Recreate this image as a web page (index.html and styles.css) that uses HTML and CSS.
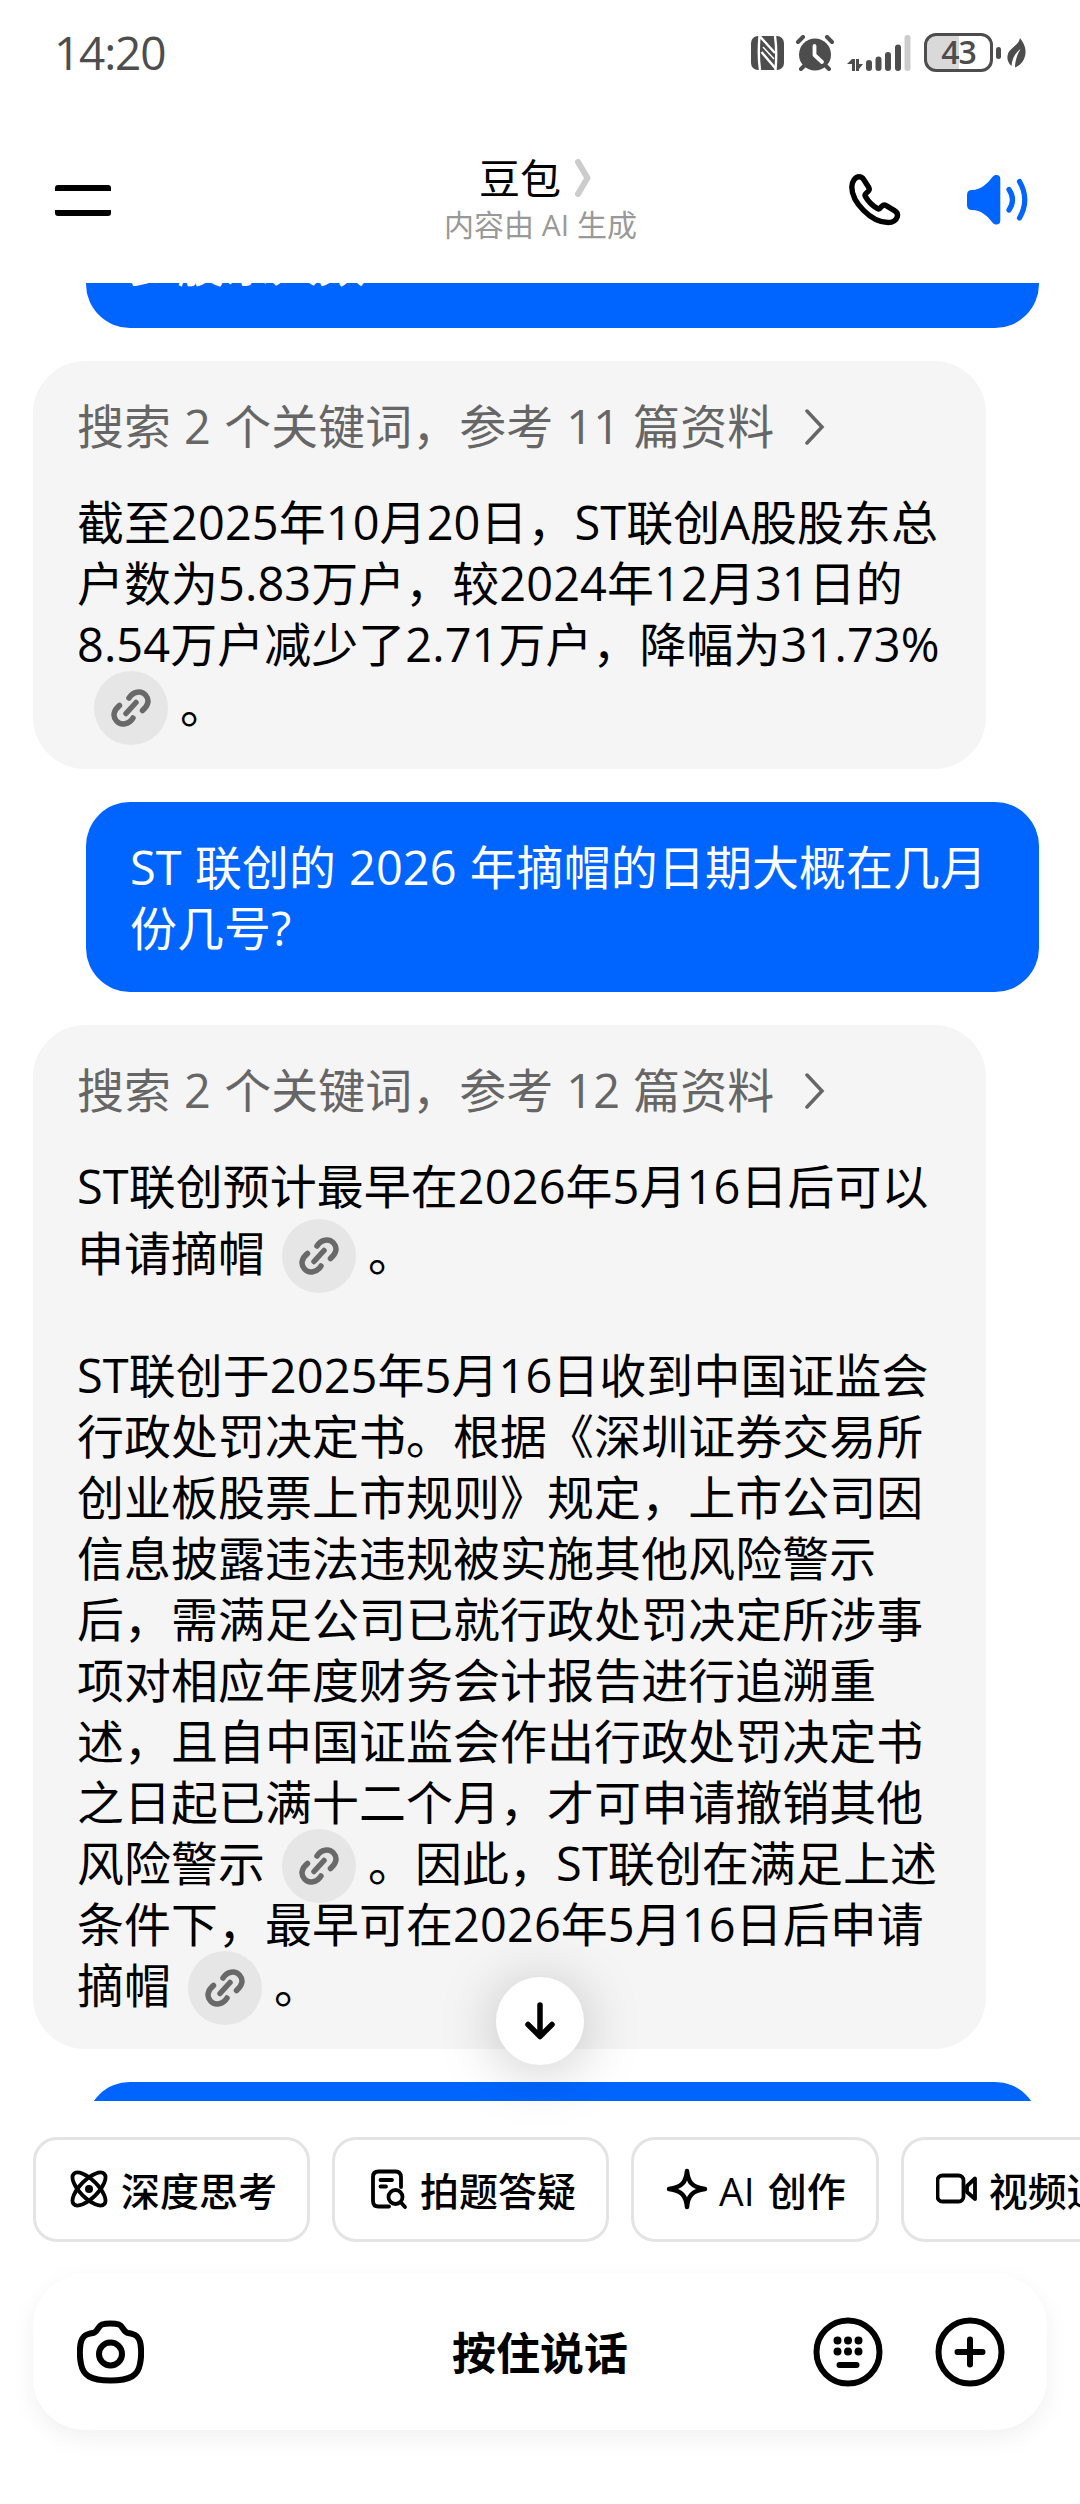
FILE: index.html
```html
<!DOCTYPE html>
<html lang="zh-CN">
<head>
<meta charset="utf-8">
<meta name="viewport" content="width=device-width">
<title>豆包</title>
<link rel="stylesheet" href="styles.css">
</head>

<body>

<!-- shared icons -->
<svg class="defs">
  <symbol id="link" viewBox="0 0 40 40">
    <path d="M18 10C22 3.500 30 2 34.500 7C39 12 37 18 31.500 22.500M22 30C18 36.500 10 38 5.500 33C1 28 3 22 8.500 17.500M15 25.500L25 14.500"/>
  </symbol>
  <symbol id="more" viewBox="0 0 20 36">
    <path d="M2 2L17 18L2 34"/>
  </symbol>
</svg>

<div class="status">
  <span class="time">14:20</span>
  <svg class="nfc" width="33" height="34" viewBox="0 0 33 34">
    <rect width="33" height="34" rx="7" fill="#4d4d4d"/>
    <path d="M8.500 0C7.500 12 7.500 24 9 34M24 0C25.500 10 25.500 22 24.500 34M8.500 0L24 17M10.500 16L25 33" fill="none" stroke="#fff" stroke-width="2.400"/>
    <path d="M12 11L23 23" fill="none" stroke="#fff" stroke-width="1.500"/>
  </svg>
  <svg class="alarm" width="38" height="36" viewBox="0 0 38 36">
    <circle cx="19" cy="19.500" r="16" fill="#4d4d4d"/>
    <path d="M2 7L7 2M36 7L31 2M5 34L9 30M33 34L29 30" stroke="#4d4d4d" stroke-width="4" stroke-linecap="round"/>
    <path d="M18.500 11V20L26 27" fill="none" stroke="#fff" stroke-width="3.800" stroke-linecap="round" stroke-linejoin="round"/>
  </svg>
  <svg class="signal" width="66" height="36" viewBox="0 0 66 36">
    <path d="M0 29L5 24H8V36H5V29ZM9 24H12V29H16L12 34V36H9Z" fill="#4d4d4d"/>
    <path d="M22 28V33M31.500 24.500V33M41 20V33M51 12.500V33" stroke="#4d4d4d" stroke-width="6" stroke-linecap="round"/>
    <path d="M60.500 3V33" stroke="#ccc" stroke-width="6" stroke-linecap="round"/>
  </svg>
  <span class="battery">43</span>
  <i class="nub"></i>
  <svg class="leaf" width="19" height="30" viewBox="0 0 19 30">
    <path d="M13 0C16 4 19 9 18.500 15C18 22 14 27 8 29.500C8 23 10 17 13.500 11C8 15 5 21 4.500 28C1 25 0 21 .5 18C1.500 10 11 9 13 0Z" fill="#4d4d4d"/>
  </svg>
</div>

<header class="header">
  <div class="side">
    <i class="menu"></i>
  </div>
  <div class="title">
    <h1>豆包
      <svg width="16" height="38" viewBox="0 0 16 38"><path d="M3 3L12.500 19L3 35"/></svg>
    </h1>
    <p>内容由 AI 生成</p>
  </div>
  <div class="side right">
    <svg width="52" height="52" viewBox="0 0 52 52">
      <path d="M2.800 13C3 7 6.500 2.800 10 2.800C12 2.800 13.500 3.800 14.500 5.300L19.500 13C20.600 14.800 20.600 16 19.200 17.400L16.800 19.600C15.800 20.600 15.800 21.500 16.500 22.600C19 27 24 32 28.500 34.600C29.700 35.200 30.300 35 31 34.200L33 32.200C34.200 30.900 35.600 30.700 37.200 31.600L45.500 36.600C48.300 38.300 49 40.500 48.200 43C47 46.500 43.500 48.500 39 48.500C22 48.500 2.800 28 2.800 13Z" fill="none" stroke="#000" stroke-width="5.400"/>
    </svg>
    <svg width="62" height="52" viewBox="0 0 62 52">
      <path d="M0 21Q0 16 5 16C14 16 21 9 25 3.500C26.500 1.500 28 1 29.500 1Q33.300 1 33.300 5V46.500Q33.300 50.500 29.500 50.500C28 50.500 26.500 50 25 48C21 42.500 14 36 5 36Q0 36 0 31Z" fill="#0065ff"/>
      <path d="M42 15.500Q49 25.700 42 36M52.500 7.500Q63 25.700 52.500 44" fill="none" stroke="#0065ff" stroke-width="5.200" stroke-linecap="round"/>
    </svg>
  </div>
</header>

<main class="chat">
  <div class="bubble user first">少股东人数</div>

  <div class="bubble bot">
    <div class="source">搜索 2 个关键词，参考 11 篇资料 <svg><use href="#more"/></svg></div>
    <p>
      截至2025年10月20日，ST联创A股股东总<br>
      户数为5.83万户，较2024年12月31日的<br>
      8.54万户减少了2.71万户，降幅为31.73%<br>
      <span class="cite"><svg><use href="#link"/></svg></span>。
    </p>
  </div>

  <div class="bubble user">
    ST 联创的 2026 年摘帽的日期大概在几月<br>
    份几号?
  </div>

  <div class="bubble bot">
    <div class="source">搜索 2 个关键词，参考 12 篇资料 <svg><use href="#more"/></svg></div>
    <p>ST联创预计最早在2026年5月16日后可以</p>
    <p class="tail">申请摘帽<span class="cite"><svg><use href="#link"/></svg></span>。</p>
    <p class="para">
      ST联创于2025年5月16日收到中国证监会<br>
      行政处罚决定书。根据《深圳证券交易所<br>
      创业板股票上市规则》规定，上市公司因<br>
      信息披露违法违规被实施其他风险警示<br>
      后，需满足公司已就行政处罚决定所涉事<br>
      项对相应年度财务会计报告进行追溯重<br>
      述，且自中国证监会作出行政处罚决定书<br>
      之日起已满十二个月，才可申请撤销其他<br>
      风险警示<span class="cite"><svg><use href="#link"/></svg></span>。因此，ST联创在满足上述<br>
      条件下，最早可在2026年5月16日后申请<br>
      摘帽<span class="cite"><svg><use href="#link"/></svg></span>。
    </p>
  </div>

  <div class="bubble user"></div>
</main>

<footer class="footer">
  <div class="scroll-down">
    <svg width="34" height="40" viewBox="0 0 34 40"><path d="M17 4V35M5 23.500L17 35.500L29 23.500"/></svg>
  </div>

  <div class="tools">
    <div class="tool">
      <svg viewBox="0 0 42 42">
        <ellipse cx="21" cy="21" rx="21.500" ry="9" transform="rotate(45 21 21)"/>
        <ellipse cx="21" cy="21" rx="21.500" ry="9" transform="rotate(-45 21 21)"/>
        <circle cx="21" cy="21" r="4" class="solid"/>
      </svg>
      深度思考
    </div>
    <div class="tool">
      <svg viewBox="0 0 42 42">
        <path d="M34 19V9Q34 3.500 28.500 3.500H11.500Q6 3.500 6 9V33Q6 38.500 11.500 38.500H22M13.500 12H25M13.500 18.500H19M34 34.500L38 39"/>
        <circle cx="28.500" cy="29" r="7"/>
      </svg>
      拍题答疑
    </div>
    <div class="tool">
      <svg viewBox="0 0 42 42">
        <path d="M21 3C22 14 26 19.500 39 21C26 22.500 22 28 21 39C20 28 16 22.500 3 21C16 19.500 20 14 21 3Z" stroke-width="4.500"/>
      </svg>
      AI 创作
    </div>
    <div class="tool">
      <svg viewBox="0 0 42 42">
        <rect x="1.500" y="7.500" width="26" height="26" rx="5"/>
        <path d="M31 18L39 10.500V31L31 24Z"/>
      </svg>
      视频通话
    </div>
  </div>

  <div class="input">
    <svg width="67" height="64" viewBox="0 0 67 64">
      <path d="M25 4.500C29 3 38 3 42 4.500C46 6 46.500 12.500 51 13C60 14 62.500 18 63.500 24C64.500 31 64.500 37 63 44C61 55 54 60.500 33.500 60.500C13 60.500 6 55 4 44C2.500 37 2.500 31 3.500 24C4.500 18 7 14 16 13C20.500 12.500 21 6 25 4.500Z"/>
      <circle cx="33.500" cy="34" r="11.500"/>
    </svg>
    <span class="hold">按住说话</span>
    <div class="actions">
      <svg width="70" height="70" viewBox="0 0 70 70">
        <circle cx="35" cy="35" r="31.500"/>
        <path d="M24.500 23.500h.01M35 23.500h.01M45.500 23.500h.01M24.500 34.500h.01M35 34.500h.01M45.500 34.500h.01" stroke-width="8"/>
        <path d="M26.500 48H43.500"/>
      </svg>
      <svg width="70" height="70" viewBox="0 0 70 70">
        <circle cx="35" cy="35" r="31.500"/>
        <path d="M35 22.500V47.500M22.500 35H47.500"/>
      </svg>
    </div>
  </div>
</footer>

</body>
</html>
```
FILE: styles.css
```css
* {
  box-sizing: border-box;
  margin: 0;
  padding: 0;
}

body {
  width: 1080px;
  height: 2504px;
  display: flex;
  flex-direction: column;
  overflow: hidden;
  background: #fff;
  color: #000;
  font-family: "Open Sans", "Noto Sans CJK SC", sans-serif;
}

svg {
  display: block;
  flex: none;
}

.defs {
  display: none;
}

/* status bar */
.status {
  height: 105px;
  padding: 0 54px 0 54px;
  display: flex;
  align-items: center;
  color: #4d4d4d;
}

.time {
  font-size: 46px;
  font-weight: 500;
  letter-spacing: -1.2px;
  margin: -2px auto 0 0;
}

.alarm {
  margin-left: 12px;
}

.signal {
  margin: 0 11px 0 13px;
}

.battery {
  width: 69px;
  height: 39px;
  border: 3px solid #4d4d4d;
  border-radius: 12px;
  background: linear-gradient(90deg, #d9d9d9 50%, #fff 50%);
  font-size: 32px;
  font-weight: 600;
  line-height: 32px;
  text-align: center;
  letter-spacing: -1px;
}

.nub {
  width: 5px;
  height: 12px;
  margin: 0 6px 0 3px;
  border-radius: 3px;
  background: #4d4d4d;
}

/* header */
.header {
  height: 178px;
  padding: 0 51px 0 55px;
  display: flex;
  align-items: center;
}

.side {
  width: 290px;
  display: flex;
  margin-top: 12px;
}

.right {
  justify-content: flex-end;
  gap: 66px;
}

.menu {
  width: 56px;
  height: 31px;
  border: solid #000;
  border-width: 6px 0;
  border-radius: 3px;
}

.title {
  flex: 1;
  margin: 7px 3px 0 0;
  text-align: center;
}

.title h1 {
  display: flex;
  justify-content: center;
  align-items: center;
  gap: 14px;
  font-size: 41px;
  font-weight: 400;
  line-height: 54px;
  margin-left: -11px;
}

.title h1 path {
  fill: none;
  stroke: #ccc;
  stroke-width: 6;
  stroke-linecap: round;
  stroke-linejoin: round;
}

.title p {
  color: #999;
  font-size: 30px;
  line-height: 40px;
}

/* chat */
.chat {
  height: 1818px;
  padding: 0 41px 0 33px;
  display: flex;
  flex-direction: column;
  gap: 33px;
  overflow: hidden;
}

.bubble {
  width: 953px;
  padding: 35px 44px 33px;
  flex: none;
  font-size: 46.9px;
  line-height: 61px;
  letter-spacing: .12px;
  word-spacing: .8px;
  white-space: nowrap;
}

.user {
  min-height: 129px;
  align-self: flex-end;
  border-radius: 44px;
  background: #0065ff;
  color: #fff;
}

.first {
  margin-top: -84px;
}

.bot {
  border-radius: 52px;
  background: #f5f5f5;
}

.source {
  display: flex;
  align-items: center;
  gap: 31px;
  margin-bottom: 35px;
  color: #666;
}

.source svg {
  width: 20px;
  height: 36px;
  fill: none;
  stroke: #666;
  stroke-width: 3.5;
  stroke-linecap: round;
}

.tail {
  margin-top: 6px;
}

.para {
  margin-top: 61px;
}

.cite {
  display: inline-flex;
  width: 74px;
  height: 74px;
  margin: -18px 12px -14px 17px;
  align-items: center;
  justify-content: center;
  vertical-align: middle;
  border-radius: 50%;
  background: #e6e6e6;
}

.cite svg {
  width: 40px;
  height: 40px;
  fill: none;
  stroke: #696969;
  stroke-width: 5.5;
  stroke-linecap: round;
}

/* bottom bar */
.footer {
  position: relative;
  flex: 1;
  padding: 36px 33px 0;
}

.scroll-down {
  position: absolute;
  top: -124px;
  left: 496px;
  width: 88px;
  height: 88px;
  display: flex;
  align-items: center;
  justify-content: center;
  border-radius: 50%;
  background: #fff;
  box-shadow: 0 6px 60px rgba(0, 0, 0, .22);
}

.scroll-down path {
  fill: none;
  stroke: #000;
  stroke-width: 5.5;
  stroke-linecap: round;
  stroke-linejoin: round;
}

.tools {
  position: relative;
  width: 1047px;
  display: flex;
  gap: 22px;
  overflow: hidden;
}

.tool {
  height: 105px;
  padding: 0 30px 2px 32px;
  flex: none;
  display: flex;
  align-items: center;
  gap: 11px;
  border: 3px solid #e4e4e4;
  border-radius: 24px;
  background: #fff;
  font-size: 39px;
  font-weight: 500;
  word-spacing: 3px;
}

.tool svg {
  width: 42px;
  height: 42px;
  fill: none;
  stroke: #000;
  stroke-width: 3.8;
  stroke-linecap: round;
  stroke-linejoin: round;
}

.tool .solid {
  fill: #000;
  stroke: none;
}

.input {
  height: 156px;
  margin-top: 32px;
  padding: 0 42px 0 44px;
  display: grid;
  grid-template-columns: 1fr auto 1fr;
  align-items: center;
  border-radius: 52px;
  background: #fff;
  box-shadow: 0 8px 24px rgba(0, 0, 0, .06);
}

.input svg {
  fill: none;
  stroke: #000;
  stroke-width: 6;
  stroke-linecap: round;
}

.hold {
  margin: -3px 2px 0 0;
  font-size: 44px;
  font-weight: 600;
}

.actions {
  display: flex;
  justify-content: flex-end;
  gap: 52px;
}
```
